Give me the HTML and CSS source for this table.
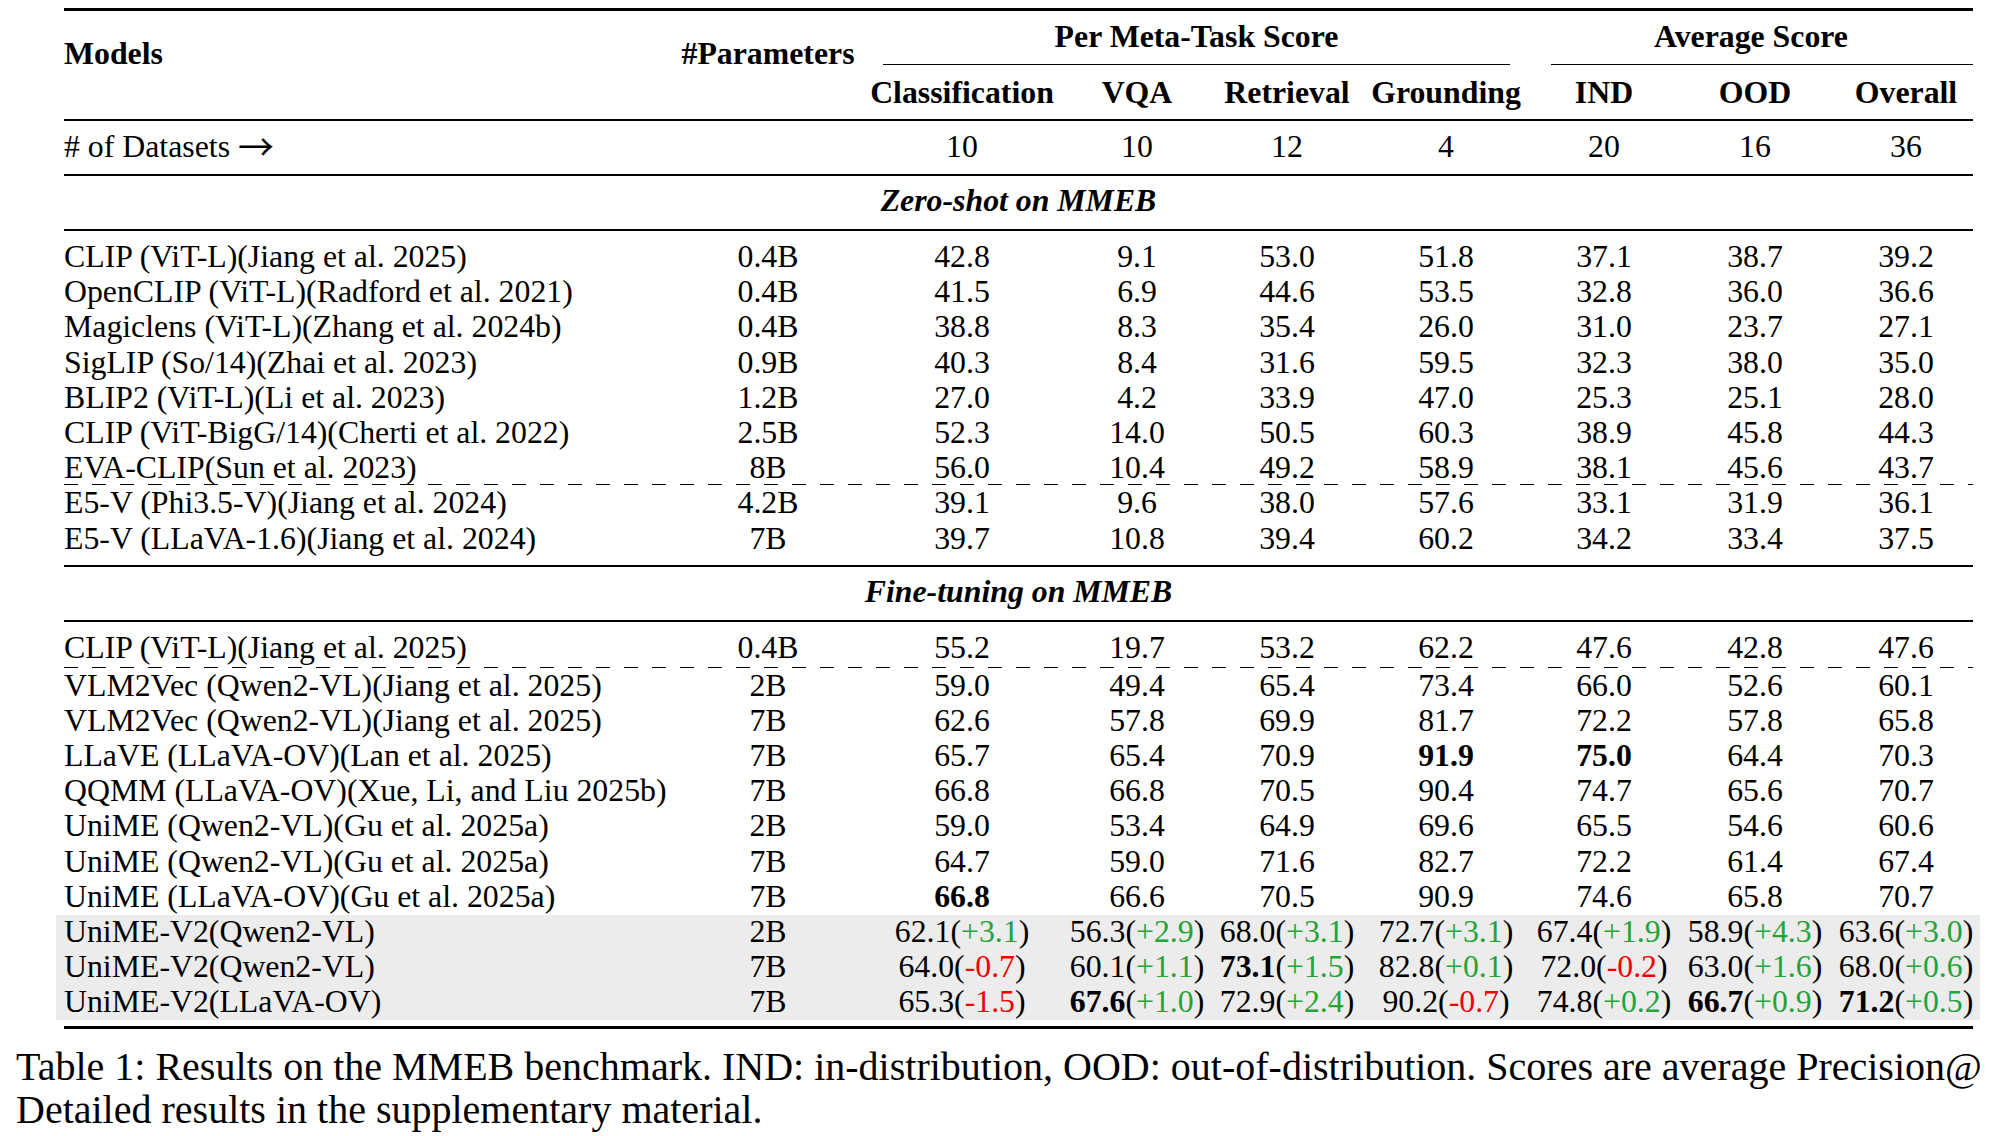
FILE: index.html
```html
<!DOCTYPE html>
<html lang="en">
<head>
<meta charset="utf-8">
<title>Table 1: Results on the MMEB benchmark</title>
<link rel="stylesheet" href="styles.css">
</head>
<body>
<div class="page">
  <div class="table">
    <div class="rule heavy"></div>
    <div class="head">
      <div class="h-models">Models</div>
      <div class="h-params">#Parameters</div>
      <div class="h-group g-meta">Per Meta-Task Score</div>
      <div class="h-group g-avg">Average Score</div>
      <div class="h-sub">Classification</div>
      <div class="h-sub">VQA</div>
      <div class="h-sub">Retrieval</div>
      <div class="h-sub">Grounding</div>
      <div class="h-sub">IND</div>
      <div class="h-sub">OOD</div>
      <div class="h-sub">Overall</div>
    </div>
    <div class="rule"></div>
    <div class="row counts">
      <div class="name"># of Datasets <span class="arrow">&rarr;</span></div><div></div>
      <div>10</div><div>10</div><div>12</div><div>4</div><div>20</div><div>16</div><div>36</div>
    </div>
    <div class="rule"></div>
    <div class="section">Zero-shot on MMEB</div>
    <div class="rule"></div>
    <div class="body body-zs">
      <div class="row"><div class="name">CLIP (ViT-L)(Jiang et al. 2025)</div><div>0.4B</div><div>42.8</div><div>9.1</div><div>53.0</div><div>51.8</div><div>37.1</div><div>38.7</div><div>39.2</div></div>
      <div class="row"><div class="name">OpenCLIP (ViT-L)(Radford et al. 2021)</div><div>0.4B</div><div>41.5</div><div>6.9</div><div>44.6</div><div>53.5</div><div>32.8</div><div>36.0</div><div>36.6</div></div>
      <div class="row"><div class="name">Magiclens (ViT-L)(Zhang et al. 2024b)</div><div>0.4B</div><div>38.8</div><div>8.3</div><div>35.4</div><div>26.0</div><div>31.0</div><div>23.7</div><div>27.1</div></div>
      <div class="row"><div class="name">SigLIP (So/14)(Zhai et al. 2023)</div><div>0.9B</div><div>40.3</div><div>8.4</div><div>31.6</div><div>59.5</div><div>32.3</div><div>38.0</div><div>35.0</div></div>
      <div class="row"><div class="name">BLIP2 (ViT-L)(Li et al. 2023)</div><div>1.2B</div><div>27.0</div><div>4.2</div><div>33.9</div><div>47.0</div><div>25.3</div><div>25.1</div><div>28.0</div></div>
      <div class="row"><div class="name">CLIP (ViT-BigG/14)(Cherti et al. 2022)</div><div>2.5B</div><div>52.3</div><div>14.0</div><div>50.5</div><div>60.3</div><div>38.9</div><div>45.8</div><div>44.3</div></div>
      <div class="row dash-zs"><div class="name">EVA-CLIP(Sun et al. 2023)</div><div>8B</div><div>56.0</div><div>10.4</div><div>49.2</div><div>58.9</div><div>38.1</div><div>45.6</div><div>43.7</div></div>
      <div class="row"><div class="name">E5-V (Phi3.5-V)(Jiang et al. 2024)</div><div>4.2B</div><div>39.1</div><div>9.6</div><div>38.0</div><div>57.6</div><div>33.1</div><div>31.9</div><div>36.1</div></div>
      <div class="row"><div class="name">E5-V (LLaVA-1.6)(Jiang et al. 2024)</div><div>7B</div><div>39.7</div><div>10.8</div><div>39.4</div><div>60.2</div><div>34.2</div><div>33.4</div><div>37.5</div></div>
    </div>
    <div class="rule"></div>
    <div class="section">Fine-tuning on MMEB</div>
    <div class="rule"></div>
    <div class="body body-ft">
      <div class="row dash-ft"><div class="name">CLIP (ViT-L)(Jiang et al. 2025)</div><div>0.4B</div><div>55.2</div><div>19.7</div><div>53.2</div><div>62.2</div><div>47.6</div><div>42.8</div><div>47.6</div></div>
      <div class="row"><div class="name">VLM2Vec (Qwen2-VL)(Jiang et al. 2025)</div><div>2B</div><div>59.0</div><div>49.4</div><div>65.4</div><div>73.4</div><div>66.0</div><div>52.6</div><div>60.1</div></div>
      <div class="row"><div class="name">VLM2Vec (Qwen2-VL)(Jiang et al. 2025)</div><div>7B</div><div>62.6</div><div>57.8</div><div>69.9</div><div>81.7</div><div>72.2</div><div>57.8</div><div>65.8</div></div>
      <div class="row"><div class="name">LLaVE (LLaVA-OV)(Lan et al. 2025)</div><div>7B</div><div>65.7</div><div>65.4</div><div>70.9</div><div><b>91.9</b></div><div><b>75.0</b></div><div>64.4</div><div>70.3</div></div>
      <div class="row"><div class="name">QQMM (LLaVA-OV)(Xue, Li, and Liu 2025b)</div><div>7B</div><div>66.8</div><div>66.8</div><div>70.5</div><div>90.4</div><div>74.7</div><div>65.6</div><div>70.7</div></div>
      <div class="row"><div class="name">UniME (Qwen2-VL)(Gu et al. 2025a)</div><div>2B</div><div>59.0</div><div>53.4</div><div>64.9</div><div>69.6</div><div>65.5</div><div>54.6</div><div>60.6</div></div>
      <div class="row"><div class="name">UniME (Qwen2-VL)(Gu et al. 2025a)</div><div>7B</div><div>64.7</div><div>59.0</div><div>71.6</div><div>82.7</div><div>72.2</div><div>61.4</div><div>67.4</div></div>
      <div class="row"><div class="name">UniME (LLaVA-OV)(Gu et al. 2025a)</div><div>7B</div><div><b>66.8</b></div><div>66.6</div><div>70.5</div><div>90.9</div><div>74.6</div><div>65.8</div><div>70.7</div></div>
      <div class="row hl"><div class="name">UniME-V2(Qwen2-VL)</div><div>2B</div><div>62.1(<span class="up">+3.1</span>)</div><div>56.3(<span class="up">+2.9</span>)</div><div>68.0(<span class="up">+3.1</span>)</div><div>72.7(<span class="up">+3.1</span>)</div><div>67.4(<span class="up">+1.9</span>)</div><div>58.9(<span class="up">+4.3</span>)</div><div>63.6(<span class="up">+3.0</span>)</div></div>
      <div class="row hl"><div class="name">UniME-V2(Qwen2-VL)</div><div>7B</div><div>64.0(<span class="down">-0.7</span>)</div><div>60.1(<span class="up">+1.1</span>)</div><div><b>73.1</b>(<span class="up">+1.5</span>)</div><div>82.8(<span class="up">+0.1</span>)</div><div>72.0(<span class="down">-0.2</span>)</div><div>63.0(<span class="up">+1.6</span>)</div><div>68.0(<span class="up">+0.6</span>)</div></div>
      <div class="row hl"><div class="name">UniME-V2(LLaVA-OV)</div><div>7B</div><div>65.3(<span class="down">-1.5</span>)</div><div><b>67.6</b>(<span class="up">+1.0</span>)</div><div>72.9(<span class="up">+2.4</span>)</div><div>90.2(<span class="down">-0.7</span>)</div><div>74.8(<span class="up">+0.2</span>)</div><div><b>66.7</b>(<span class="up">+0.9</span>)</div><div><b>71.2</b>(<span class="up">+0.5</span>)</div></div>
    </div>
    <div class="rule heavy"></div>
  </div>
  <div class="caption">
    <p class="cap-line">Table 1: Results on the MMEB benchmark. IND: in-distribution, OOD: out-of-distribution. Scores are average Precision@</p>
    <p class="cap-line">Detailed results in the supplementary material.</p>
  </div>
</div>
</body>
</html>
```
FILE: styles.css
```css
html, body {
  margin: 0;
  padding: 0;
  background: #ffffff;
}

body {
  width: 2006px;
  height: 1136px;
  overflow: hidden;
  font-family: "Liberation Serif", "Times New Roman", serif;
  color: #000;
}

.page {
  padding-top: 8px;
}

.table {
  margin-left: 64px;
  width: 1914px;
  font-size: 31.8px;
  line-height: 24px;
}

.rule {
  height: 2px;
  margin-right: 5px;
  background: #000;
}

.rule.heavy {
  height: 3px;
}

/* column grid shared by the header and every row */
.head,
.row {
  display: grid;
  grid-template-columns: 608px 192px 196px 154px 146px 172px 144px 158px 144px;
}

.head {
  grid-template-rows: 54px 54px;
  font-weight: bold;
  text-align: center;
}

.h-models {
  grid-row: 1 / 3;
  grid-column: 1;
  text-align: left;
  padding-top: 31px;
}

.h-params {
  grid-row: 1 / 3;
  grid-column: 2;
  padding-top: 31px;
  white-space: nowrap;
}

.h-group {
  grid-row: 1;
  padding-top: 14.3px;
  border-bottom: 1px solid #000;
  box-sizing: border-box;
  height: 54px;
}

.g-meta {
  grid-column: 3 / 7;
  margin: 0 22px 0 19px;
}

.g-avg {
  grid-column: 7 / 10;
  margin: 0 5px 0 19px;
  padding-right: 22px;
}

.h-sub {
  grid-row: 2;
  padding-top: 15.5px;
  white-space: nowrap;
}

.row {
  height: 35.2px;
  line-height: 33px;
  text-align: center;
  white-space: nowrap;
}

.row .name {
  text-align: left;
}

.row.counts {
  height: 53px;
  line-height: 24px;
  padding-top: 13.5px;
  box-sizing: border-box;
}

.arrow {
  font-family: "Noto Sans CJK JP", "DejaVu Sans", sans-serif;
  font-size: 36px;
  line-height: 0;
  vertical-align: -4px;
}

.section {
  height: 53px;
  padding-top: 12.5px;
  box-sizing: border-box;
  text-align: center;
  font-weight: bold;
  font-style: italic;
  margin-right: 5px;
}

.body-zs {
  padding-top: 9px;
  padding-bottom: 8.8px;
}

.body-ft {
  padding-top: 8.9px;
  padding-bottom: 6px;
}

.dash-zs {
  background: repeating-linear-gradient(to right, #000 0 14px, transparent 14px 28px) left 0 bottom 1px / 1909px 1px no-repeat;
}

.dash-ft {
  padding-bottom: 2px;
  background: repeating-linear-gradient(to right, #000 0 14px, transparent 14px 28px) left 0 bottom 1px / 1909px 1px no-repeat;
}

.row.hl {
  background: #ececec;
  margin: 0 -2px 0 -8px;
  padding: 0 2px 0 8px;
}

b {
  font-weight: bold;
}

.up {
  color: #24a336;
}

.down {
  color: #f00000;
}

.caption {
  margin-top: 15.5px;
  padding-left: 16px;
  font-size: 40px;
  line-height: 43.5px;
}

.cap-line {
  margin: 0;
  white-space: nowrap;
}
```
